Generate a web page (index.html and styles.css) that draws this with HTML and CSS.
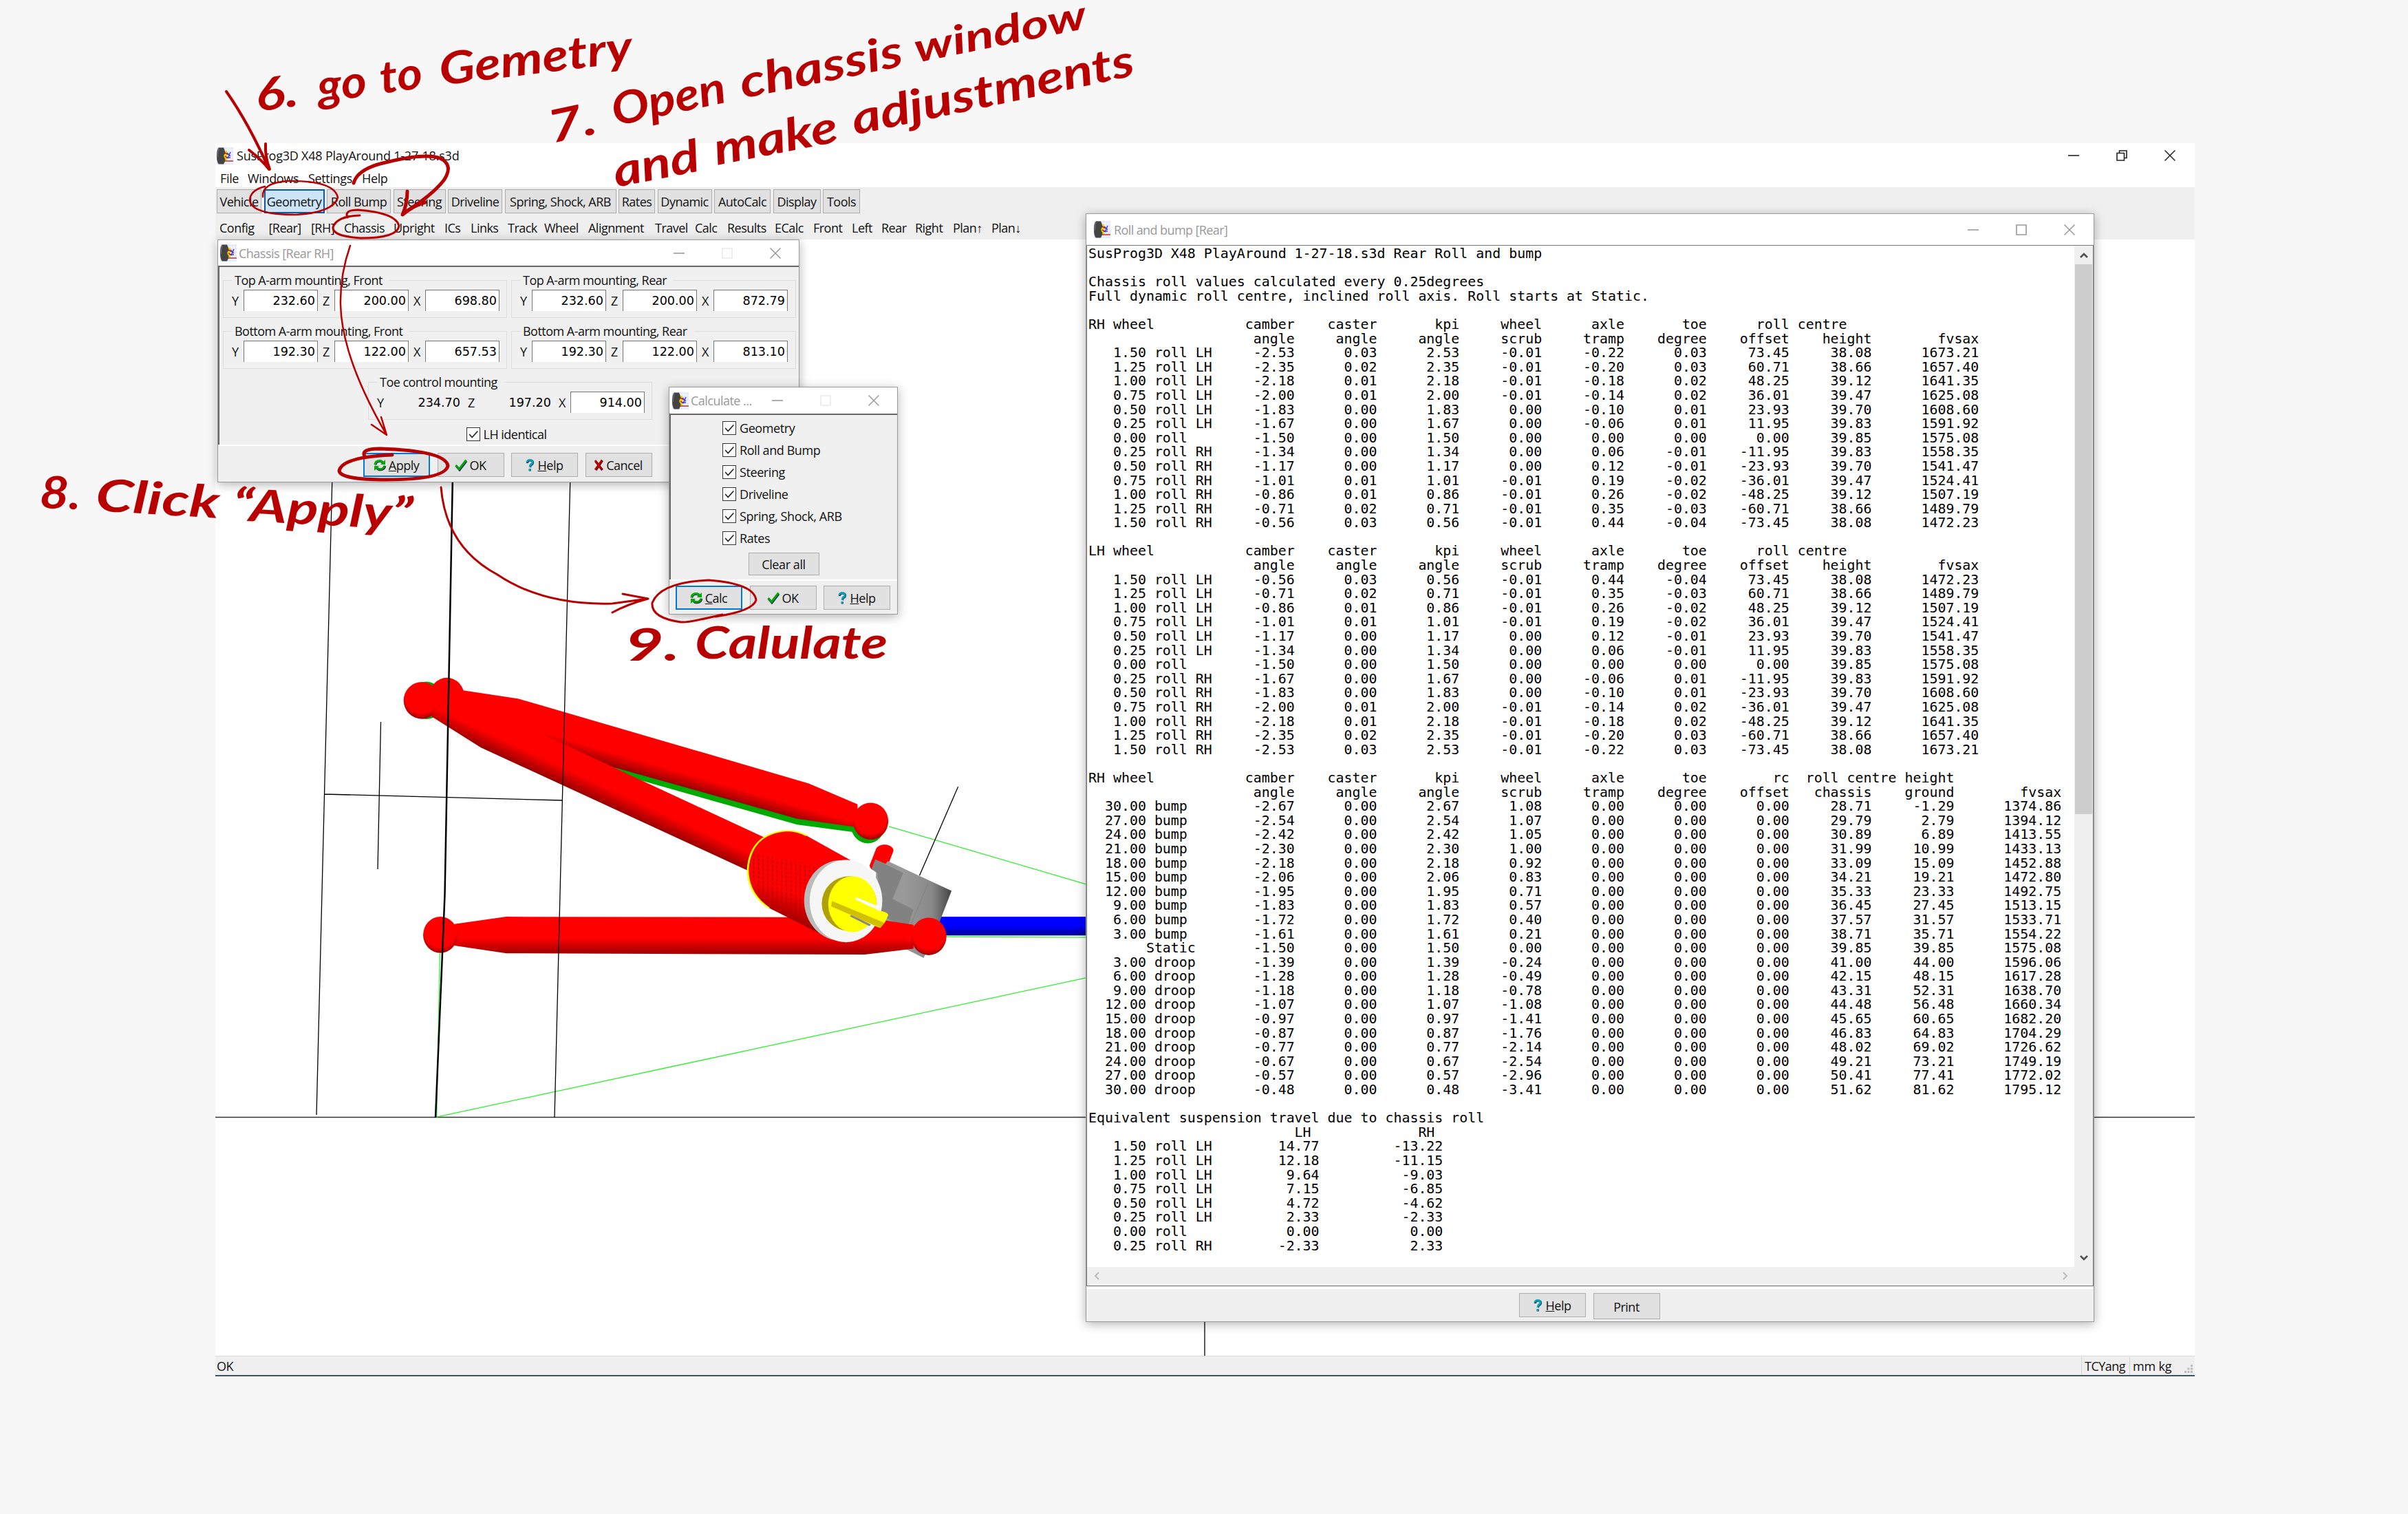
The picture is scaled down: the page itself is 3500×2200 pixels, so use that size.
FILE: index.html
```html
<!DOCTYPE html>
<html lang="en">
<head>
<meta charset="utf-8">
<title>SusProg3D X48 PlayAround 1-27-18.s3d</title>
<link rel="stylesheet" href="styles.css">
</head>
<body>
<svg class="defs" width="0" height="0">
  <symbol id="logo" viewBox="0 0 24 25">
    <rect width="24" height="25" fill="#e4e8fb"/>
    <path d="M16 0v25M20 0v25M12 4h12M12 9h12M12 14h12M12 22h12" stroke="#f8f9ff" stroke-width="1"/>
    <rect x="9" y="5" width="6" height="15" fill="#e8d800"/>
    <path d="M12 8l5 3M12 13l5 3" stroke="#e02020" stroke-width="1.5"/>
    <path d="M15 8l5 5M16 16l4-9M14 15h6" stroke="#3a3ae0" stroke-width="1.5"/>
    <path d="M11 20h13" stroke="#c83c28" stroke-width="1.6"/>
    <path d="M3 .5h7Q12 4 12.500 9 8 12 12.500 17 12 22 10 24.500H3Q0 22 0 12.500T3 .5z" fill="#444"/>
    <path d="M3 2Q1 8 1.500 14" stroke="#777" fill="none"/>
  </symbol>
  <symbol id="refresh" viewBox="0 0 18 18">
    <path d="M2.500 8.500Q3 3.500 8.500 3q3.500 0 5 2.500" fill="none" stroke="#101060" stroke-width="3.600"/>
    <path d="M16.500 10q-1 5-6.500 5.500-3.500 0-5-2.500" fill="none" stroke="#101060" stroke-width="3.600"/>
    <path d="M2 8Q2.500 3 8 2.500q3.500 0 5 2.500" fill="none" stroke="#00b400" stroke-width="3"/>
    <path d="M16 9.500q-1 5-6.500 5.500-3.500 0-5-2.500" fill="none" stroke="#00a000" stroke-width="3"/>
    <path d="M17 1v7h-7zM1 17v-7h7z" fill="#00a800"/>
  </symbol>
  <symbol id="check" viewBox="0 0 18 18">
    <path d="M2 10l5 6L17 3" fill="none" stroke="#0a2a60" stroke-width="3"/>
    <path d="M1.500 9l5 5.500L16.500 1.500" fill="none" stroke="#00a800" stroke-width="3"/>
  </symbol>
  <symbol id="quest" viewBox="0 0 12 18">
    <path d="M2.500 6Q2.500 2 6.500 2q4 0 4 3T7.500 8.500L6.500 12M6.300 14.500v3" fill="none" stroke="#0a2a70" stroke-width="3"/>
    <path d="M1.800 5Q2 1.500 6 1.500q4 0 4 3T7 8L6 12M5.800 14v3" fill="none" stroke="#00a8b4" stroke-width="2.500"/>
  </symbol>
  <symbol id="cross" viewBox="0 0 14 18">
    <path d="M2.500 3l10 13M12.500 2L3 16" stroke="#400000" stroke-width="3.400"/>
    <path d="M2 2l10 13.500M12 1.500L2 15.500" stroke="#c00000" stroke-width="2.800"/>
  </symbol>
  <symbol id="min" viewBox="0 0 16 16"><path d="M0 8h16" stroke="currentColor" stroke-width="1.600"/></symbol>
  <symbol id="max" viewBox="0 0 16 16"><path d="M1 1h14v14H1z" fill="none" stroke="currentColor" stroke-width="1.600"/></symbol>
  <symbol id="close" viewBox="0 0 16 16"><path d="M.5.5l15 15M15.500.5l-15 15" stroke="currentColor" stroke-width="1.500"/></symbol>
  <symbol id="tick" viewBox="0 0 20 20"><path d="M3.500 10l4.500 5L17 5" fill="none" stroke="#222" stroke-width="1.800"/></symbol>
</svg>

<main class="app">
  <header class="app-title">
    <svg class="logo"><use href="#logo"/></svg>
    <span class="app-name">SusProg3D X48 PlayAround 1-27-18.s3d</span>
    <div class="app-controls">
      <svg><use href="#min"/></svg>
      <svg viewBox="0 0 16 16"><path d="M1 4.500h10.500V15H1zM4.500 4V1H15v10.500h-3" fill="none" stroke="currentColor" stroke-width="1.600"/></svg>
      <svg><use href="#close"/></svg>
    </div>
  </header>
  <nav class="menu"><span>File</span><span>Windows</span><span>Settings</span><span>Help</span></nav>
  <div class="bars">
    <nav class="tabs">
      <button>Vehicle</button><button class="on">Geometry</button><button>Roll Bump</button><button>Steering</button><button>Driveline</button><button>Spring, Shock, ARB</button><button>Rates</button><button>Dynamic</button><button>AutoCalc</button><button>Display</button><button>Tools</button>
    </nav>
    <nav class="links">
      <span>Config</span><span>[Rear]</span><span>[RH]</span><span>Chassis</span><span>Upright</span><span>ICs</span><span>Links</span><span>Track</span><span>Wheel</span><span>Alignment</span><span>Travel</span><span>Calc</span><span>Results</span><span>ECalc</span><span>Front</span><span>Left</span><span>Rear</span><span>Right</span><span>Plan↑</span><span>Plan↓</span>
    </nav>
  </div>

  <section class="canvas">
    <svg class="scene" viewBox="313 348 2877 1622">
      <defs>
        <linearGradient id="gA" gradientUnits="userSpaceOnUse" x1="665" y1="431" x2="682" y2="392"><stop offset="0" stop-color="#900"/><stop offset="1" stop-color="#f00"/></linearGradient>
        <linearGradient id="gB" gradientUnits="userSpaceOnUse" x1="500" y1="490" x2="528" y2="450"><stop offset="0" stop-color="#900"/><stop offset="1" stop-color="#f00"/></linearGradient>
        <linearGradient id="gC" gradientUnits="userSpaceOnUse" x1="0" y1="980" x2="0" y2="925"><stop offset="0" stop-color="#900"/><stop offset="1" stop-color="#f00"/></linearGradient>
        <linearGradient id="gD" gradientUnits="userSpaceOnUse" x1="905" y1="880" x2="945" y2="800"><stop offset="0" stop-color="#900"/><stop offset="1" stop-color="#f00"/></linearGradient>
        <linearGradient id="gBlue" x1="0" y1="0" x2="0" y2="1"><stop offset=".5" stop-color="#00f"/><stop offset="1" stop-color="#000090"/></linearGradient>
        <linearGradient id="gGrey" x1="0" y1="0" x2="1" y2="0"><stop offset=".4" stop-color="#999"/><stop offset=".75" stop-color="#888"/><stop offset="1" stop-color="#444"/></linearGradient>
        <radialGradient id="ball" cx=".5" cy=".38" r=".62"><stop offset=".75" stop-color="#f00"/><stop offset="1" stop-color="#900"/></radialGradient>
        <pattern id="mesh" width="10" height="14" patternUnits="userSpaceOnUse" patternTransform="skewY(12)"><path d="M2 0v9" stroke="#a00" stroke-width="2"/></pattern>
      </defs>
      <path d="M313 1623.500H3190M1751 1623V1970" class="ink thick"/>
      <g transform="translate(540 950) scale(.6761 .4464)">
        <path d="M1112 562L1536 750M140 1508L1536 1055M1235 921L1536 923" class="green"/>
        <path d="M1261 433L1178 722" class="ink"/>
        <rect x="1215" y="856" width="330" height="61" fill="url(#gBlue)"/>
        <path d="M470 338L580 413L915 556L1035 580L1040 540L700 400z" fill="#0a0"/>
        <ellipse cx="1067" cy="560" rx="36" ry="57" fill="#0a0"/>
        <ellipse cx="118" cy="152" rx="36" ry="61" fill="#0a0"/>
        <ellipse cx="108" cy="152" rx="39" ry="60" fill="url(#ball)"/>
        <ellipse cx="162" cy="140" rx="38" ry="62" fill="#f00"/>
        <path d="M160 115L200 120L315 146L940 422L1045 490L1045 565L915 537L415 325L150 200z" fill="url(#gA)"/>
        <path d="M130 120L300 215L845 598L850 735L805 703L235 305L130 205z" fill="url(#gB)"/>
        <ellipse cx="1073" cy="545" rx="38" ry="60" fill="url(#ball)"/>
        <path d="M1103 640L1090 690" stroke="#f00" stroke-width="38" stroke-linecap="round"/>
        <path d="M1083 670L1105 684L1110 675L1247 772L1222 870L1187 990L1150 962L1080 900L1085 700z" fill="url(#gGrey)"/>
        <path d="M1083 670L1143 713L1120 798L1165 832L1152 895L1095 850L1088 715L1075 700z" fill="#828282"/>
        <path d="M1197 745L1160 880" stroke="#777" fill="none"/>
        <path d="M178 880L290 856L1060 858L1165 882L1165 960L1060 979L290 975L178 950z" fill="url(#gC)"/>
        <ellipse cx="148" cy="915" rx="37" ry="59" fill="url(#ball)"/>
        <path d="M893 577Q915 577 935 592L1030 672L1015 805L965 912L855 828Q808 780 808 700Q815 585 893 577z" fill="url(#gD)"/>
        <path d="M815 650L960 690L935 880L855 828Q815 780 815 650z" fill="url(#mesh)"/>
        <path d="M935 592Q915 576 893 576Q815 585 809 700Q808 780 855 828" fill="none" stroke="#ff0" stroke-width="4"/>
        <ellipse cx="1009" cy="803" rx="79" ry="131" fill="#bbb"/>
        <ellipse cx="1020" cy="805" rx="78" ry="134" fill="#f6f6f6"/>
        <ellipse cx="1027" cy="813" rx="59" ry="89" fill="#b0a000"/>
        <ellipse cx="1034" cy="815" rx="52" ry="91" fill="#ff0"/>
        <path d="M1040 797L1090 828" stroke="#fff" stroke-width="10"/>
        <path d="M1030 852L1072 884" stroke="#888" stroke-width="6"/>
        <path d="M990 768Q1010 755 1030 792L1090 836Q1110 840 1111 850L1098 895L1080 885L1000 825z" fill="#ff0"/>
        <path d="M988 822L1098 895L1103 876L990 805z" fill="#d0c000"/>
        <path d="M1105 872L1165 884L1165 940L1090 900z" fill="#f00"/>
        <ellipse cx="1198" cy="920" rx="38" ry="61" fill="url(#ball)"/>
        <path d="M147 975L140 1508" class="green"/>
      </g>
      <path d="M483 690L460 1620M829 690L806 1624M471 1154L817 1163M553.500 1049L549 1263" class="ink"/>
      <path d="M658 690L646.500 1300L633 1624" class="ink heavy"/>
    </svg>
  </section>

  <footer class="status"><span class="ok">OK</span><span class="cell user">TCYang</span><span class="cell units">mm kg</span>
    <svg class="grip" viewBox="0 0 12 12"><path d="M9 0h3v3H9zM9 4.500h3v3H9zM9 9h3v3H9zM4.500 4.500h3v3h-3zM4.500 9h3v3h-3zM0 9h3v3H0z" fill="#bbb"/></svg>
  </footer>

  <section class="window roll">
    <header class="bar"><svg class="logo"><use href="#logo"/></svg><h2>Roll and bump [Rear]</h2>
      <div class="controls"><svg><use href="#min"/></svg><svg><use href="#max"/></svg><svg><use href="#close"/></svg></div></header>
    <div class="memo">
<pre>SusProg3D X48 PlayAround 1-27-18.s3d Rear Roll and bump

Chassis roll values calculated every 0.25degrees
Full dynamic roll centre, inclined roll axis. Roll starts at Static.

RH wheel           camber    caster       kpi     wheel      axle       toe      roll centre
                    angle     angle     angle     scrub     tramp    degree    offset    height        fvsax
   1.50 roll LH     -2.53      0.03      2.53     -0.01     -0.22      0.03     73.45     38.08      1673.21
   1.25 roll LH     -2.35      0.02      2.35     -0.01     -0.20      0.03     60.71     38.66      1657.40
   1.00 roll LH     -2.18      0.01      2.18     -0.01     -0.18      0.02     48.25     39.12      1641.35
   0.75 roll LH     -2.00      0.01      2.00     -0.01     -0.14      0.02     36.01     39.47      1625.08
   0.50 roll LH     -1.83      0.00      1.83      0.00     -0.10      0.01     23.93     39.70      1608.60
   0.25 roll LH     -1.67      0.00      1.67      0.00     -0.06      0.01     11.95     39.83      1591.92
   0.00 roll        -1.50      0.00      1.50      0.00      0.00      0.00      0.00     39.85      1575.08
   0.25 roll RH     -1.34      0.00      1.34      0.00      0.06     -0.01    -11.95     39.83      1558.35
   0.50 roll RH     -1.17      0.00      1.17      0.00      0.12     -0.01    -23.93     39.70      1541.47
   0.75 roll RH     -1.01      0.01      1.01     -0.01      0.19     -0.02    -36.01     39.47      1524.41
   1.00 roll RH     -0.86      0.01      0.86     -0.01      0.26     -0.02    -48.25     39.12      1507.19
   1.25 roll RH     -0.71      0.02      0.71     -0.01      0.35     -0.03    -60.71     38.66      1489.79
   1.50 roll RH     -0.56      0.03      0.56     -0.01      0.44     -0.04    -73.45     38.08      1472.23

LH wheel           camber    caster       kpi     wheel      axle       toe      roll centre
                    angle     angle     angle     scrub     tramp    degree    offset    height        fvsax
   1.50 roll LH     -0.56      0.03      0.56     -0.01      0.44     -0.04     73.45     38.08      1472.23
   1.25 roll LH     -0.71      0.02      0.71     -0.01      0.35     -0.03     60.71     38.66      1489.79
   1.00 roll LH     -0.86      0.01      0.86     -0.01      0.26     -0.02     48.25     39.12      1507.19
   0.75 roll LH     -1.01      0.01      1.01     -0.01      0.19     -0.02     36.01     39.47      1524.41
   0.50 roll LH     -1.17      0.00      1.17      0.00      0.12     -0.01     23.93     39.70      1541.47
   0.25 roll LH     -1.34      0.00      1.34      0.00      0.06     -0.01     11.95     39.83      1558.35
   0.00 roll        -1.50      0.00      1.50      0.00      0.00      0.00      0.00     39.85      1575.08
   0.25 roll RH     -1.67      0.00      1.67      0.00     -0.06      0.01    -11.95     39.83      1591.92
   0.50 roll RH     -1.83      0.00      1.83      0.00     -0.10      0.01    -23.93     39.70      1608.60
   0.75 roll RH     -2.00      0.01      2.00     -0.01     -0.14      0.02    -36.01     39.47      1625.08
   1.00 roll RH     -2.18      0.01      2.18     -0.01     -0.18      0.02    -48.25     39.12      1641.35
   1.25 roll RH     -2.35      0.02      2.35     -0.01     -0.20      0.03    -60.71     38.66      1657.40
   1.50 roll RH     -2.53      0.03      2.53     -0.01     -0.22      0.03    -73.45     38.08      1673.21

RH wheel           camber    caster       kpi     wheel      axle       toe        rc  roll centre height
                    angle     angle     angle     scrub     tramp    degree    offset   chassis    ground        fvsax
  30.00 bump        -2.67      0.00      2.67      1.08      0.00      0.00      0.00     28.71     -1.29      1374.86
  27.00 bump        -2.54      0.00      2.54      1.07      0.00      0.00      0.00     29.79      2.79      1394.12
  24.00 bump        -2.42      0.00      2.42      1.05      0.00      0.00      0.00     30.89      6.89      1413.55
  21.00 bump        -2.30      0.00      2.30      1.00      0.00      0.00      0.00     31.99     10.99      1433.13
  18.00 bump        -2.18      0.00      2.18      0.92      0.00      0.00      0.00     33.09     15.09      1452.88
  15.00 bump        -2.06      0.00      2.06      0.83      0.00      0.00      0.00     34.21     19.21      1472.80
  12.00 bump        -1.95      0.00      1.95      0.71      0.00      0.00      0.00     35.33     23.33      1492.75
   9.00 bump        -1.83      0.00      1.83      0.57      0.00      0.00      0.00     36.45     27.45      1513.15
   6.00 bump        -1.72      0.00      1.72      0.40      0.00      0.00      0.00     37.57     31.57      1533.71
   3.00 bump        -1.61      0.00      1.61      0.21      0.00      0.00      0.00     38.71     35.71      1554.22
       Static       -1.50      0.00      1.50      0.00      0.00      0.00      0.00     39.85     39.85      1575.08
   3.00 droop       -1.39      0.00      1.39     -0.24      0.00      0.00      0.00     41.00     44.00      1596.06
   6.00 droop       -1.28      0.00      1.28     -0.49      0.00      0.00      0.00     42.15     48.15      1617.28
   9.00 droop       -1.18      0.00      1.18     -0.78      0.00      0.00      0.00     43.31     52.31      1638.70
  12.00 droop       -1.07      0.00      1.07     -1.08      0.00      0.00      0.00     44.48     56.48      1660.34
  15.00 droop       -0.97      0.00      0.97     -1.41      0.00      0.00      0.00     45.65     60.65      1682.20
  18.00 droop       -0.87      0.00      0.87     -1.76      0.00      0.00      0.00     46.83     64.83      1704.29
  21.00 droop       -0.77      0.00      0.77     -2.14      0.00      0.00      0.00     48.02     69.02      1726.62
  24.00 droop       -0.67      0.00      0.67     -2.54      0.00      0.00      0.00     49.21     73.21      1749.19
  27.00 droop       -0.57      0.00      0.57     -2.96      0.00      0.00      0.00     50.41     77.41      1772.02
  30.00 droop       -0.48      0.00      0.48     -3.41      0.00      0.00      0.00     51.62     81.62      1795.12

Equivalent suspension travel due to chassis roll
                         LH             RH
   1.50 roll LH        14.77         -13.22
   1.25 roll LH        12.18         -11.15
   1.00 roll LH         9.64          -9.03
   0.75 roll LH         7.15          -6.85
   0.50 roll LH         4.72          -4.62
   0.25 roll LH         2.33          -2.33
   0.00 roll            0.00           0.00
   0.25 roll RH        -2.33           2.33</pre>
      <div class="vscroll">
        <svg viewBox="0 0 12 8"><path d="M1 7l5-5 5 5" fill="none" stroke="#505050" stroke-width="2.600"/></svg>
        <div class="thumb"></div>
        <svg viewBox="0 0 12 8"><path d="M1 1l5 5 5-5" fill="none" stroke="#505050" stroke-width="2.600"/></svg>
      </div>
      <div class="hscroll">
        <svg viewBox="0 0 8 12"><path d="M7 1L2 6l5 5" fill="none" stroke="#bbb" stroke-width="2"/></svg>
        <svg viewBox="0 0 8 12"><path d="M1 1l5 5-5 5" fill="none" stroke="#bbb" stroke-width="2"/></svg>
      </div>
    </div>
    <footer class="actions"><button class="btn"><svg class="ic q"><use href="#quest"/></svg><span><u>H</u>elp</span></button><button class="btn tall">Print</button></footer>
  </section>

  <section class="window chassis">
    <header class="bar"><svg class="logo"><use href="#logo"/></svg><h2>Chassis [Rear RH]</h2>
      <div class="controls"><svg><use href="#min"/></svg><svg class="faint"><use href="#max"/></svg><svg><use href="#close"/></svg></div></header>
    <div class="panel">
      <div class="groups">
        <fieldset><legend>Top A-arm mounting, Front</legend><div class="coords"><i>Y</i><b>232.60</b><i>Z</i><b>200.00</b><i>X</i><b>698.80</b></div></fieldset>
        <fieldset><legend>Top A-arm mounting, Rear</legend><div class="coords"><i>Y</i><b>232.60</b><i>Z</i><b>200.00</b><i>X</i><b>872.79</b></div></fieldset>
        <fieldset><legend>Bottom A-arm mounting, Front</legend><div class="coords"><i>Y</i><b>192.30</b><i>Z</i><b>122.00</b><i>X</i><b>657.53</b></div></fieldset>
        <fieldset><legend>Bottom A-arm mounting, Rear</legend><div class="coords"><i>Y</i><b>192.30</b><i>Z</i><b>122.00</b><i>X</i><b>813.10</b></div></fieldset>
        <fieldset class="toe"><legend>Toe control mounting</legend><div class="coords"><i>Y</i><b class="ro">234.70</b><i>Z</i><b class="ro">197.20</b><i>X</i><b>914.00</b></div></fieldset>
      </div>
      <label class="check"><svg class="box"><use href="#tick"/></svg>LH identical</label>
    </div>
    <footer class="actions">
      <button class="btn focus"><svg class="ic"><use href="#refresh"/></svg><span><u>A</u>pply</span></button>
      <button class="btn"><svg class="ic"><use href="#check"/></svg>OK</button>
      <button class="btn"><svg class="ic q"><use href="#quest"/></svg><span><u>H</u>elp</span></button>
      <button class="btn"><svg class="ic x"><use href="#cross"/></svg>Cancel</button>
    </footer>
  </section>

  <section class="window calc">
    <header class="bar"><svg class="logo"><use href="#logo"/></svg><h2>Calculate ...</h2>
      <div class="controls"><svg><use href="#min"/></svg><svg class="faint"><use href="#max"/></svg><svg><use href="#close"/></svg></div></header>
    <div class="panel">
      <label class="check"><svg class="box"><use href="#tick"/></svg>Geometry</label>
      <label class="check"><svg class="box"><use href="#tick"/></svg>Roll and Bump</label>
      <label class="check"><svg class="box"><use href="#tick"/></svg>Steering</label>
      <label class="check"><svg class="box"><use href="#tick"/></svg>Driveline</label>
      <label class="check"><svg class="box"><use href="#tick"/></svg>Spring, Shock, ARB</label>
      <label class="check"><svg class="box"><use href="#tick"/></svg>Rates</label>
      <button class="btn clear">Clear all</button>
    </div>
    <footer class="actions">
      <button class="btn focus"><svg class="ic"><use href="#refresh"/></svg><span><u>C</u>alc</span></button>
      <button class="btn"><svg class="ic"><use href="#check"/></svg>OK</button>
      <button class="btn"><svg class="ic q"><use href="#quest"/></svg><span><u>H</u>elp</span></button>
    </footer>
  </section>
</main>

<svg class="notes" viewBox="0 0 3500 2200">
  <g class="hand">
    <g transform="translate(374 162) rotate(-8)"><text textLength="62" lengthAdjust="spacingAndGlyphs">6.</text></g>
    <g transform="translate(464 149) rotate(-8)"><text textLength="72" lengthAdjust="spacingAndGlyphs">go</text></g>
    <g transform="translate(555 136) rotate(-8)"><text textLength="62" lengthAdjust="spacingAndGlyphs">to</text></g>
    <g transform="translate(641 124) rotate(-7)"><text textLength="282" lengthAdjust="spacingAndGlyphs">Gemetry</text></g>
    <g transform="translate(802 208) rotate(-12)"><text textLength="70" lengthAdjust="spacingAndGlyphs">7.</text></g>
    <g transform="translate(894 183) rotate(-12)"><text textLength="168" lengthAdjust="spacingAndGlyphs">Open</text></g>
    <g transform="translate(1080 143) rotate(-11.500)"><text textLength="240" lengthAdjust="spacingAndGlyphs">chassis</text></g>
    <g transform="translate(1333 91) rotate(-11.500)"><text class="low" textLength="254" lengthAdjust="spacingAndGlyphs">window</text></g>
    <g transform="translate(896 272) rotate(-11)"><text textLength="126" lengthAdjust="spacingAndGlyphs">and</text></g>
    <g transform="translate(1042 240) rotate(-11)"><text textLength="182" lengthAdjust="spacingAndGlyphs">make</text></g>
    <g transform="translate(1243 196) rotate(-12)"><text textLength="418" lengthAdjust="spacingAndGlyphs">adjustments</text></g>
    <g transform="translate(57 738) rotate(2)"><text textLength="60" lengthAdjust="spacingAndGlyphs">8.</text></g>
    <g transform="translate(138 742) rotate(3.500)"><text textLength="180" lengthAdjust="spacingAndGlyphs">Click</text></g>
    <g transform="translate(337 756) rotate(3)"><text textLength="262" lengthAdjust="spacingAndGlyphs">“Apply”</text></g>
    <g transform="translate(908 960)"><text textLength="80" lengthAdjust="spacingAndGlyphs">9.</text></g>
    <g transform="translate(1010 957)"><text textLength="280" lengthAdjust="spacingAndGlyphs">Calulate</text></g>
  </g>
  <g class="pen">
    <path d="M329 133Q362 180 391 246M362 218Q380 232 391 246M386 209Q385 228 392 246" stroke-width="4"/>
    <path d="M382 286Q380 266 418 263Q486 262 491 287Q484 309 430 312Q366 312 363 291Q364 276 385 271" stroke-width="2.500"/>
    <path d="M514 266Q520 244 565 235Q618 222 640 230Q660 240 645 262Q628 284 586 310M592 278Q592 296 585 312Q602 298 618 294" stroke-width="5"/>
    <path d="M505 316Q500 305 520 305Q575 309 580 328Q578 346 524 346Q482 343 484 330Q490 314 523 313" stroke-width="3"/>
    <path d="M509 357Q494 400 495 443Q497 520 562 632M540 617L562 632L554 606" stroke-width="2.500"/>
    <path d="M530 663Q524 652 552 652Q648 655 651 677Q646 697 562 697Q494 697 493 684Q498 664 570 661" stroke-width="5"/>
    <path d="M641 708Q648 795 723 835Q790 880 890 877Q920 873 942 870M905 863L942 870Q912 878 890 890" stroke-width="3"/>
    <path d="M1050 893Q1000 905 990 904Q946 898 948 876Q960 846 1030 843Q1096 848 1099 872Q1094 888 1040 896" stroke-width="3"/>
  </g>
</svg>
</body>
</html>
```
FILE: styles.css
```css
* { box-sizing: border-box; }
body {
  margin: 0;
  width: 3500px;
  height: 2200px;
  padding: 208px 0 0 313px;
  background: #f7f7f7;
  position: relative;
  overflow: hidden;
  font: 18px/24px "Open Sans", sans-serif;
  letter-spacing: -0.52px;
  color: #111;
}
.defs { position: absolute; }
button, label { font: inherit; letter-spacing: inherit; color: inherit; }
svg { display: block; flex: none; }

.app {
  position: relative;
  width: 2877px;
  height: 1792px;
  background: #fff;
  display: flex;
  flex-direction: column;
  border-bottom: 2px solid #3c5560;
}
.app-title { height: 36px; display: flex; align-items: center; padding-left: 2px; }
.logo { width: 24px; height: 25px; }
.app-name { margin-left: 5px; letter-spacing: -0.22px; }
.app-controls { margin-left: auto; display: flex; gap: 54px; padding-right: 28px; color: #222; }
.app-controls svg { width: 16px; height: 16px; }
.menu { height: 28px; display: grid; grid-template-columns: 40px 88px 78px 60px; align-items: center; padding: 2px 0 0 7px; letter-spacing: -0.35px; }
.bars { height: 76px; background: #efefef; }
.tabs {
  display: grid;
  grid-template-columns: 65px 88px 93px 76px 79px 162px 53px 79px 82px 69px 54px;
  column-gap: 3.500px;
  padding: 3px 0 0 2px;
}
.tabs button { height: 35px; padding: 0; border: 1px solid #adadad; background: #e1e1e1; white-space: nowrap; }
.tabs .on { background: #cce4f7; border: 2px solid #0a5a9f; }
.links {
  display: grid;
  grid-template-columns: 71.500px 61.500px 48px 72px 74px 38px 54px 53px 64px 97px 58px 47px 69px 56px 56px 43px 49px 55px 56px 60px;
  padding: 9px 0 0 6px;
  white-space: nowrap;
}
.canvas { flex: 1; overflow: hidden; }
.scene { width: 2877px; height: 1622px; }
.ink { fill: none; stroke: #000; stroke-width: 1.300; vector-effect: non-scaling-stroke; }
.thick { stroke: #333; stroke-width: 1.600; }
.heavy { stroke-width: 2.500; }
.green { fill: none; stroke: #2df02d; stroke-width: 1.300; vector-effect: non-scaling-stroke; }
.status { height: 28px; background: #efefef; border-top: 1px solid #d9d9d9; display: flex; align-items: center; }
.ok { margin-right: auto; padding-left: 2px; }
.cell { border-left: 1px solid #d4d4d4; padding-left: 4px; height: 26px; line-height: 26px; }
.user { width: 70px; }
.units { width: 80px; letter-spacing: -0.2px; }
.grip { width: 12px; height: 12px; align-self: flex-end; margin: 0 3px 3px 0; }

.window {
  position: absolute;
  display: flex;
  flex-direction: column;
  background: #f0f0f0;
  border: 1px solid #9a9a9a;
  box-shadow: 0 3px 14px rgba(0, 0, 0, .3);
}
.bar { display: flex; align-items: center; background: #fff; color: #999; }
.bar h2 { margin: 0 0 0 3px; font: inherit; }
.controls { margin-left: auto; display: flex; gap: 54px; }
.controls svg { width: 16px; height: 16px; }
.faint { opacity: .2; }
.btn {
  display: flex;
  align-items: center;
  justify-content: center;
  gap: 4px;
  width: 97px;
  height: 35px;
  padding: 1px 1px 0 0;
  border: 1px solid #adadad;
  background: #e1e1e1;
}
.btn.focus { border: 2px solid #0078d7; }
.ic { width: 18px; height: 18px; }
.ic.q { width: 12px; margin-right: 2px; }
.ic.x { width: 14px; }
.check { display: flex; align-items: center; gap: 5px; height: 32px; }
.box { width: 20px; height: 20px; background: #fff; border: 1px solid #333; }
.panel { border: solid #696969; border-width: 2px 0 0 2px; }
.actions { display: flex; border-top: 2px solid #fff; }

.roll { left: 1265px; top: 102px; width: 1466px; height: 1611px; }
.roll .bar { height: 45px; padding: 0 27px 0 11px; }
.roll h2 { margin-left: 5px; letter-spacing: -0.6px; }
.memo {
  height: 1513px;
  border: 1px solid #777;
  background: #fff;
  display: grid;
  grid-template-columns: 1fr 27px;
  grid-template-rows: 1fr 27px;
}
pre {
  margin: 0;
  padding: 2px 0 0 2px;
  font: 19.920px/20.586px "DejaVu Sans Mono", monospace;
  letter-spacing: 0;
  color: #000;
  overflow: hidden;
}
.vscroll { background: #f0f0f0; display: flex; flex-direction: column; align-items: center; padding: 10px 0 9px; }
.vscroll svg { width: 12px; height: 8px; }
.thumb { width: 25px; height: 799px; margin: 9px 0 auto; background: #cdcdcd; }
.hscroll { grid-column: 1 / 3; background: #f0f0f0; display: flex; justify-content: space-between; align-items: center; padding: 0 36px 2px 10px; }
.hscroll svg { width: 8px; height: 14px; }
.roll .actions { margin-top: 2px; padding: 6px 0 0 629px; gap: 11px; }
.roll .tall { height: 38px; }

.chassis { left: 3px; top: 140px; width: 846px; height: 353px; }
.chassis .bar { height: 37px; padding: 0 26px 0 3px; }
.chassis .panel { height: 260px; display: flex; flex-direction: column; align-items: center; }
.groups { width: 100%; display: grid; grid-template-columns: 413px 414px; gap: 6px; padding: 6px 0 0 5px; }
fieldset { min-width: 0; height: 68px; margin: 0; padding: 0 0 0 12px; border: 1px solid #dcdcdc; }
legend { height: 27px; padding: 0 10px 0 4px; line-height: 27px; }
.coords { display: grid; grid-template-columns: 17px 108px 24px 108px 24px 108px; align-items: center; }
.coords i { font-style: normal; }
.coords i:nth-of-type(n + 2) { padding-left: 7px; }
.coords b {
  height: 31px;
  padding-right: 3px;
  font: 17.600px/31px "DejaVu Sans", sans-serif;
  letter-spacing: 0;
  text-align: right;
  color: #000;
  background: #fff;
  border: solid #777;
  border-width: 1px 1px 0 1px;
}
.coords b.ro { background: none; border-color: transparent; }
.toe { grid-column: 1 / 3; width: 413px; justify-self: start; margin-left: 211px; }
.chassis .check { margin: 5px 0 0 -8px; }
.chassis .actions { padding: 10px 0 0 211px; gap: 10.500px; }

.calc { left: 659px; top: 354px; width: 333px; height: 331px; }
.calc .bar { height: 38px; padding: 0 26px 0 4px; }
.calc .panel { height: 241px; padding: 3px 0 0 75px; letter-spacing: -0.42px; }
.calc .clear { width: 103px; height: 33px; margin: 5px 0 0 38px; }
.calc .actions { padding: 7px 0 0 9px; gap: 10.500px; }

.notes { position: absolute; left: 0; top: 0; width: 3500px; height: 2200px; pointer-events: none; }
.hand { fill: #b90000; font: italic 700 65px Lato, sans-serif; letter-spacing: 0; }
.hand .low { font-size: 58px; }
.pen { fill: none; stroke: #b90000; stroke-linecap: round; stroke-linejoin: round; }
```
